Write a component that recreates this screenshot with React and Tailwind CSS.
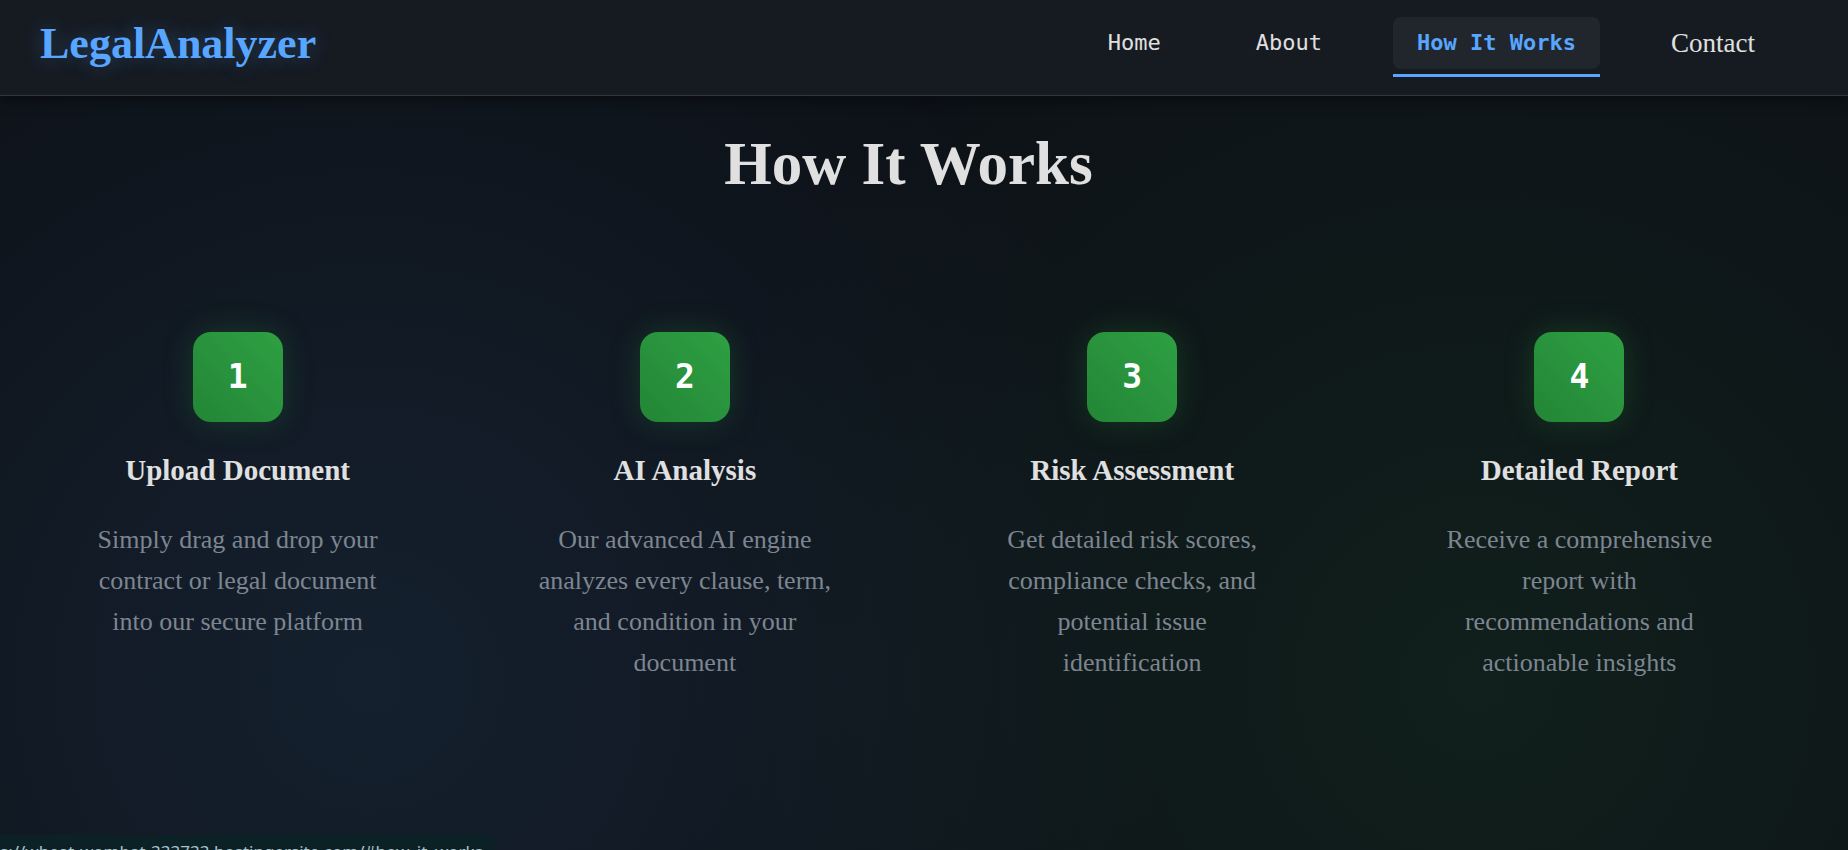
const links = [
  { label: 'Home', href: '#home', look: 'font-["DejaVu_Sans_Mono",monospace] text-[22px] text-[#e0e0e0]' },
  { label: 'About', href: '#about', look: 'font-["DejaVu_Sans_Mono",monospace] text-[22px] text-[#e0e0e0]' },
  {
    label: 'How It Works',
    href: '#how_it_works',
    current: true,
    look: 'bg-[#21262d] font-["DejaVu_Sans_Mono",monospace] text-[22px] font-bold text-[#58a6ff]',
  },
  { label: 'Contact', href: '#contact', look: 'font-["Liberation_Serif",serif] text-[27px] text-[#e0e0e0]' },
];

const steps = [
  { title: 'Upload Document', text: 'Simply drag and drop your contract or legal document into our secure platform' },
  { title: 'AI Analysis', text: 'Our advanced AI engine analyzes every clause, term, and condition in your document' },
  { title: 'Risk Assessment', text: 'Get detailed risk scores, compliance checks, and potential issue\nidentification' },
  { title: 'Detailed Report', text: 'Receive a comprehensive report with recommendations and actionable insights' },
];

function Header() {
  return (
    <header className="relative flex h-24 items-start justify-between border-b border-[#30363d] bg-[#161b22] pr-[69px] pl-10 shadow-[0_4px_12px_rgba(0,0,0,0.4)]">
      <a
        href="#home"
        className='pt-5 font-["Liberation_Serif",serif] text-[44px] leading-[48px] font-bold text-[#58a6ff] [text-shadow:0_0_20px_rgba(88,166,255,0.3)]'
      >
        LegalAnalyzer
      </a>
      <nav aria-label="Main" className="flex gap-[47px] pt-[17px]">
        {links.map((link) => (
          <div key={link.label} className={link.current ? 'border-b-3 border-[#58a6ff] pb-[5px]' : ''}>
            <a
              href={link.href}
              aria-current={link.current ? 'page' : undefined}
              className={`block rounded-lg px-6 leading-[52px] ${link.look}`}
            >
              {link.label}
            </a>
          </div>
        ))}
      </nav>
    </header>
  );
}

function Step({ number, title, text }) {
  return (
    <li className="flex flex-col items-center text-center">
      <div className='flex size-[90px] items-center justify-center rounded-[18px] bg-linear-to-tr from-[#238636] to-[#2ea043] font-["DejaVu_Sans_Mono",monospace] text-[33px] font-bold text-white shadow-[0_0_30px_rgba(46,160,67,0.25)]'>
        {number}
      </div>
      <h2 className="mt-7 text-[29px] leading-10 font-bold text-[#e0e0e0]">{title}</h2>
      <p className="mt-[29px] max-w-[304px] text-[26px] leading-[41px] whitespace-pre-line text-[#7d8590]">{text}</p>
    </li>
  );
}

export default function App() {
  return (
    <div className='relative flex min-h-screen flex-col overflow-hidden bg-[#0d1117] bg-[radial-gradient(circle_at_20%_80%,rgba(88,166,255,0.1)_0%,transparent_50%),radial-gradient(circle_at_80%_80%,rgba(46,160,67,0.1)_0%,transparent_50%)] font-["Liberation_Serif",serif]'>
      <Header />
      <main className="mr-[31px] px-3.5">
        <h1 className="pt-8 text-center text-[61px] leading-[72px] font-bold text-[#e0e0e0]">How It Works</h1>
        <ol className="mt-[132px] grid grid-cols-4">
          {steps.map((step, i) => (
            <Step key={step.title} number={i + 1} {...step} />
          ))}
        </ol>
      </main>
      <div className='absolute bottom-0 left-0 h-[15px] overflow-hidden rounded-tr-lg bg-[#0c2126] pt-[6px] pr-3 font-["Noto_Sans",sans-serif] text-[17px] leading-[22px] whitespace-nowrap text-[#a9c3cc]'>
        s://wheat-wombat-333733.hostingersite.com/#how_it_works
      </div>
    </div>
  );
}
